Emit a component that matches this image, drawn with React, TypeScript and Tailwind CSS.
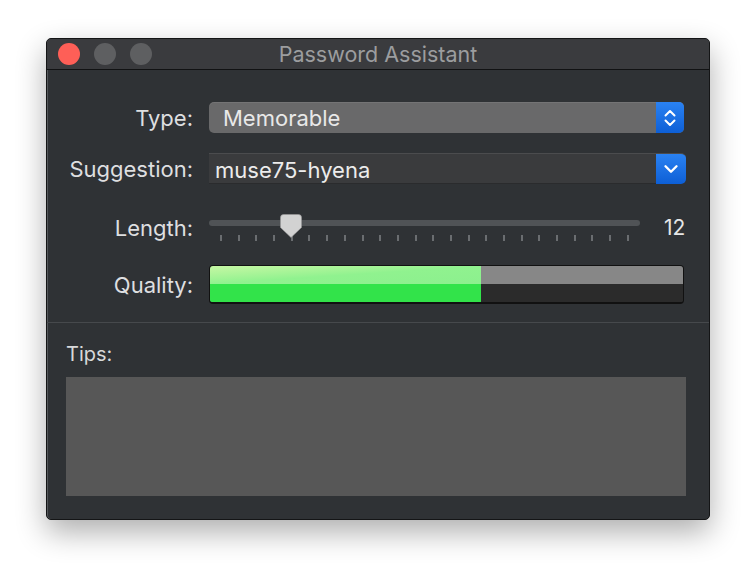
import { ChevronDown } from "lucide-react";

const TICKS = Array.from({ length: 24 }, (_, i) => i);

function TrafficLight({ color }: { color: string }) {
  return <span className={`block h-[22px] w-[22px] rounded-full ${color}`} />;
}

function UpDownIcon() {
  return (
    <svg width="14" height="20" viewBox="0 0 14 20" fill="none" stroke="white" strokeWidth="2" strokeLinecap="round" strokeLinejoin="round">
      <path d="M2.5 7.5 L7 3 L11.5 7.5" />
      <path d="M2.5 12.5 L7 17 L11.5 12.5" />
    </svg>
  );
}

function Knob() {
  return (
    <svg width="22" height="24" viewBox="0 0 22 24">
      <path d="M3.5 0.5 H18.5 A3 3 0 0 1 21.5 3.5 V13.5 L11 23.5 L0.5 13.5 V3.5 A3 3 0 0 1 3.5 0.5 Z" fill="#d2d2d2" stroke="#9a9a9a" strokeWidth="0.6" />
    </svg>
  );
}

export default function App() {
  const lengthIndex = 4;

  return (
    <div className="h-[574px] w-[756px] bg-white pl-[46px] pt-[38px] font-['Inter','Liberation_Sans',sans-serif]">
      <div className="flex h-[482px] w-[664px] flex-col overflow-hidden rounded-[5px] border border-[#141516] bg-[#2f3235] shadow-[0_12px_30px_rgba(0,0,0,0.32),inset_1px_0_0_#55585b]">
        {/* title bar */}
        <div className="relative flex h-[31px] shrink-0 items-center gap-[14px] border-b border-[#111213] bg-[#3a3b3e] pl-[11px]">
          <TrafficLight color="bg-[#fe5f57]" />
          <TrafficLight color="bg-[#5e5f61]" />
          <TrafficLight color="bg-[#5e5f61]" />
          <span className="absolute inset-x-0 text-center text-[21.5px] leading-[28px] text-[#9c9d9f]">Password Assistant</span>
        </div>

        {/* form */}
        <div className="grid grid-cols-[146px_477px] items-center gap-x-[16px] text-[22px] leading-[28px] text-[#dedfe0]">
          <span className="mt-[32px] text-right">Type:</span>
          <div className="mt-[32px] flex h-[31px] w-[475px] overflow-hidden rounded-[5px] bg-[#69696a] shadow-[inset_0_1px_0_rgba(255,255,255,0.08)]">
            <span className="flex flex-1 items-center pl-[14px] text-[#e8e8e8]">Memorable</span>
            <span className="flex w-[28px] items-center justify-center bg-gradient-to-b from-[#2a82f2] to-[#0d5fd6]">
              <UpDownIcon />
            </span>
          </div>

          <span className="mt-[20px] text-right">Suggestion:</span>
          <div className="mt-[20px] flex h-[31px] overflow-hidden rounded-r-[5px] border-t border-[#4b4c4e] bg-[#3a3b3d] shadow-[inset_0_-1px_0_#2a2b2d]">
            <span className="flex flex-1 items-center pl-[6px] pt-[2px] text-[#ececec]">muse75-hyena</span>
            <span className="flex w-[30px] items-center justify-center bg-gradient-to-b from-[#2a82f2] to-[#0d5fd6]">
              <ChevronDown size={22} color="white" strokeWidth={2.6} />
            </span>
          </div>

          <span className="mt-[30px] text-right">Length:</span>
          <div className="mt-[30px] flex h-[28px] items-start">
            <div className="relative h-[28px] w-[431px]">
              <div className="absolute left-0 top-[6px] h-[6px] w-[431px] rounded-full bg-[#505356]" />
              <div className="absolute left-[11px] top-[21px] flex w-[409px] justify-between">
                {TICKS.map((t) => (
                  <span key={t} className="block h-[6px] w-[2px] bg-[#6a6d70]" />
                ))}
              </div>
              <div className="absolute top-0" style={{ left: `${lengthIndex * (409 / 23)}px` }}>
                <Knob />
              </div>
            </div>
            <span className="ml-[24px] mt-[1px] text-[21px] leading-[26px] text-[#e6e6e6]">12</span>
          </div>

          <span className="mt-[23px] text-right">Quality:</span>
          <div className="mt-[23px] flex h-[39px] w-[475px] overflow-hidden rounded-[4px] border border-b-2 border-[#111]">
            <div className="flex w-[271px] flex-col">
              <div className="h-[18px] bg-gradient-to-br from-[#c6f7a4] via-[#90f28f] to-[#8cf08e]" />
              <div className="flex-1 bg-[#32e34a]" />
            </div>
            <div className="flex flex-1 flex-col">
              <div className="h-[18px] bg-[#878787]" />
              <div className="flex-1 bg-[#2b2b2b]" />
            </div>
          </div>
        </div>

        <div className="mt-[18px] h-[1px] shrink-0 bg-[#46494c]" />

        <div className="flex flex-1 flex-col pb-[23px] pl-[19px] pr-[23px]">
          <span className="mt-[19px] text-[20px] leading-[24px] text-[#d8d9da]">Tips:</span>
          <div className="mt-[11px] flex-1 bg-[#575757]" />
        </div>
      </div>
    </div>
  );
}
